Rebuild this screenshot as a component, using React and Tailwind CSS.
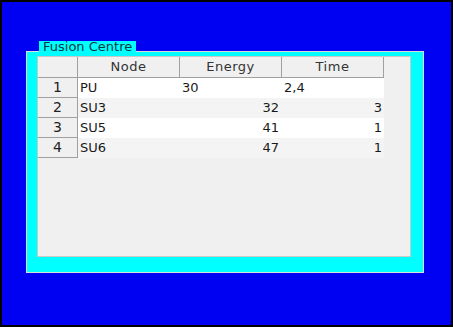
import React from "react";

const rows = [
  { n: 1, node: "PU", energy: "30", time: "2,4", left: true },
  { n: 2, node: "SU3", energy: "32", time: "3" },
  { n: 3, node: "SU5", energy: "41", time: "1" },
  { n: 4, node: "SU6", energy: "47", time: "1" },
];

export default function App() {
  const font = { fontFamily: '"DejaVu Sans", Verdana, sans-serif' };
  return (
    <div className="w-[453px] h-[327px] bg-black p-[2px]" style={font}>
      <div className="w-full h-full bg-[#0000f2] pl-[24px] pt-[49px]">
        <div className="relative w-[398px] h-[222px] bg-[#00ffff] border border-[#dcdcdc] pl-[10px] pt-[4px]">
          <div className="absolute left-[12px] top-[-11px] h-[12px] px-[4px] bg-[#00ffff] text-[13px] leading-[12px] text-[#053a3a]">
            Fusion Centre
          </div>
          <div className="w-[374px] h-[201px] bg-[#f0f0f0] border border-[#c8c8c8] text-[13px] text-[#1a1a1a]">
            <div className="grid grid-cols-[40px_102px_102px_102px] grid-rows-[21px_20px_20px_20px_20px]">
              <div className="border-r border-b border-[#a0a0a0] bg-[#f0f0f0]" />
              {["Node", "Energy", "Time"].map((h) => (
                <div
                  key={h}
                  className="border-r border-b border-[#a0a0a0] bg-[#f0f0f0] flex items-center justify-center tracking-[0.5px] text-[13px] text-[#333]"
                >
                  {h}
                </div>
              ))}
              {rows.map((r) => {
                const bg = r.n % 2 === 1 ? "bg-white" : "bg-[#f4f4f4]";
                return (
                  <React.Fragment key={r.n}>
                    <div className="border-r border-b border-[#a0a0a0] bg-[#f0f0f0] flex items-center justify-center text-[14px] text-[#222]">
                      {r.n}
                    </div>
                    <div className={`${bg} flex items-center pl-[2px]`}>{r.node}</div>
                    <div className={`${bg} flex items-center ${r.left ? "pl-[2px]" : "justify-end pr-[3px]"}`}>
                      {r.energy}
                    </div>
                    <div className={`${bg} flex items-center ${r.left ? "pl-[2px]" : "justify-end pr-[2px]"}`}>
                      {r.time}
                    </div>
                  </React.Fragment>
                );
              })}
            </div>
          </div>
        </div>
      </div>
    </div>
  );
}
